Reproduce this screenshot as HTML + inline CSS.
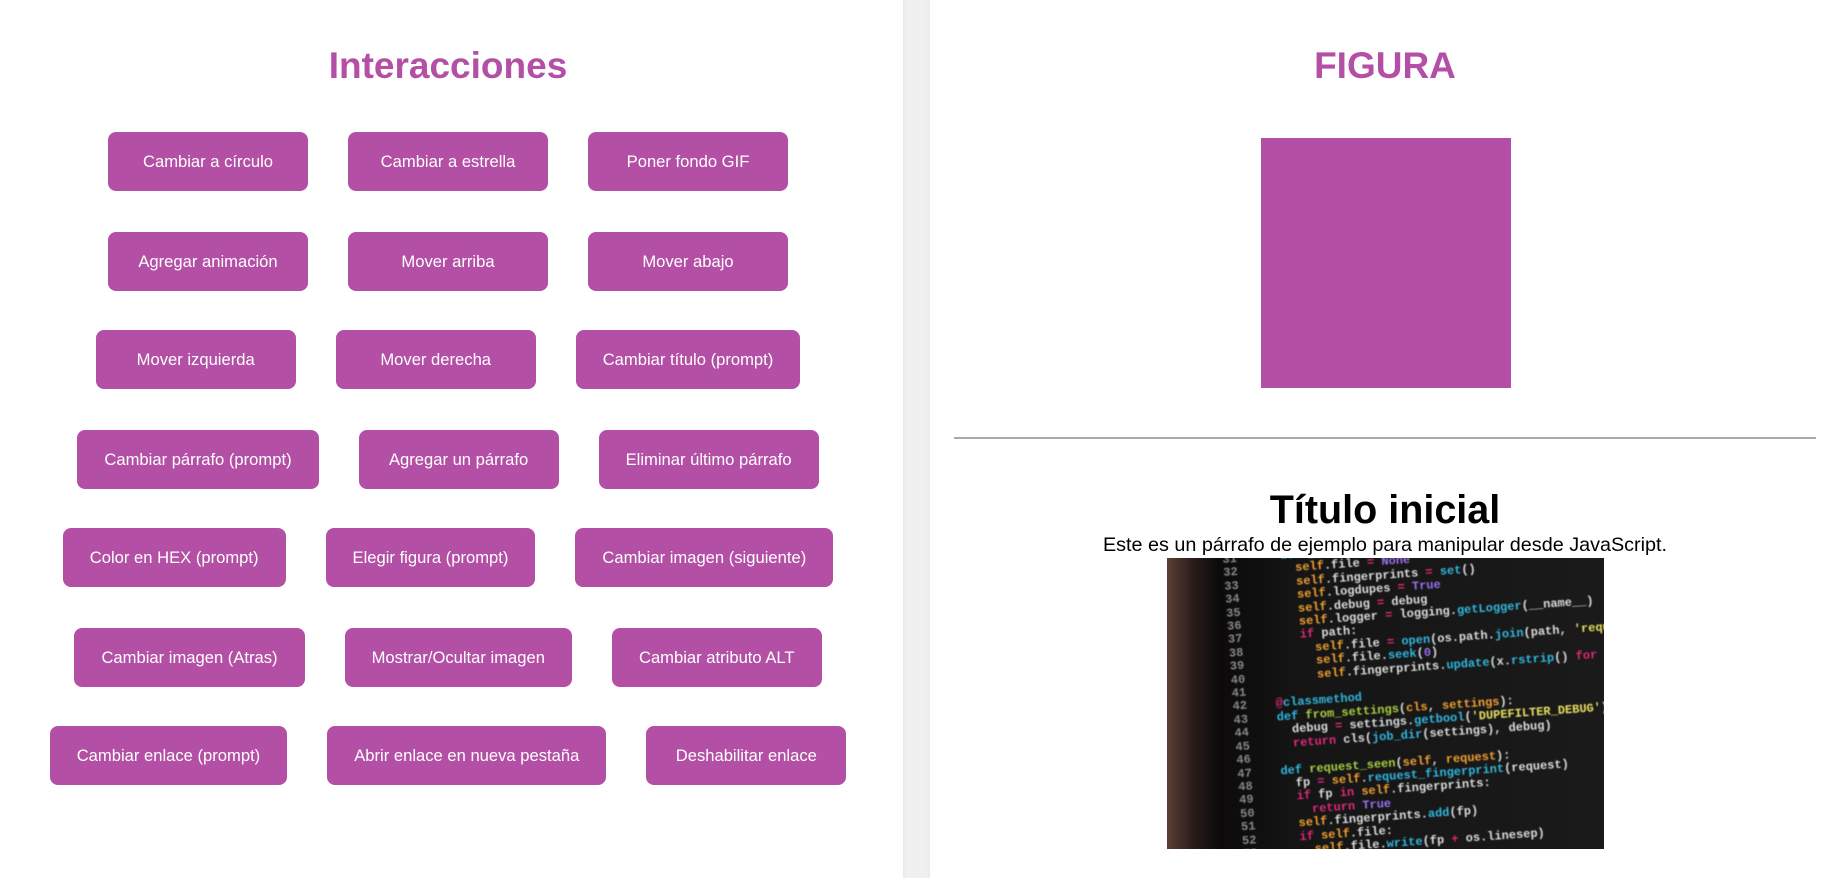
<!DOCTYPE html>
<html><head><meta charset="utf-8"><style>
*{margin:0;padding:0;box-sizing:border-box}
html{width:1837px;height:878px;overflow:hidden}
body{width:1837px;height:878px;overflow:hidden;background:#f0f0f0;font-family:"Liberation Sans",Arial,sans-serif;position:relative}
.panel{position:absolute;top:-14px;background:#fff;border-radius:14px;box-shadow:0 0 6px rgba(0,0,0,.06)}
#l{left:-14px;width:917px;height:892px;border-radius:14px 14px 0 0}
#r{left:930px;width:930px;height:892px;border-radius:14px 14px 0 0}
h1{position:absolute;color:#b44fa6;font-size:37px;font-weight:bold;text-align:center;line-height:42px}
.row{position:absolute;left:0;width:896px;display:flex;justify-content:center;gap:40px}
.b{height:59px;min-width:200px;padding:0 27px;background:#b44fa6;color:#fff;border-radius:8px;font-size:16.6px;display:flex;align-items:center;justify-content:center;white-space:nowrap}
.sq{position:absolute;left:1261px;top:138px;width:250px;height:250px;background:#b44fa6}
.hr{position:absolute;left:954px;top:437px;width:862px;height:2px;background:#aaa}
.t{position:absolute;left:954px;width:862px;text-align:center;color:#000}
.img{position:absolute;left:1167px;top:558px;width:437px;height:291px;overflow:hidden;background:linear-gradient(90deg,#5a4038 0%,#2a1c18 6%,#0c0a0a 12%,#151515 30%,#1a1a1a 100%)}
.img pre{position:absolute;left:55px;top:-4px;font-family:"Liberation Mono",monospace;font-size:12px;line-height:13.4px;color:#ddd;transform:rotate(-4deg);transform-origin:0 0;font-weight:bold;filter:blur(.4px)}
.n{color:#888}.o{color:#f0a030}.p{color:#e0287a}.c{color:#30b8e0}.g{color:#a8d040}.v{color:#9a70f0}.y{color:#e8e060}
</style></head><body>
<div class="panel" id="l"></div>
<div class="panel" id="r"></div>
<h1 style="left:0;width:896px;top:45px">Interacciones</h1>
<h1 style="left:954px;width:862px;top:45px">FIGURA</h1>
<div class="row" style="top:132px"><div class="b">Cambiar a círculo</div><div class="b">Cambiar a estrella</div><div class="b">Poner fondo GIF</div></div>
<div class="row" style="top:232px"><div class="b">Agregar animación</div><div class="b">Mover arriba</div><div class="b">Mover abajo</div></div>
<div class="row" style="top:330px"><div class="b">Mover izquierda</div><div class="b">Mover derecha</div><div class="b">Cambiar título (prompt)</div></div>
<div class="row" style="top:430px"><div class="b">Cambiar párrafo (prompt)</div><div class="b">Agregar un párrafo</div><div class="b">Eliminar último párrafo</div></div>
<div class="row" style="top:528px"><div class="b">Color en HEX (prompt)</div><div class="b">Elegir figura (prompt)</div><div class="b">Cambiar imagen (siguiente)</div></div>
<div class="row" style="top:628px"><div class="b">Cambiar imagen (Atras)</div><div class="b">Mostrar/Ocultar imagen</div><div class="b">Cambiar atributo ALT</div></div>
<div class="row" style="top:726px"><div class="b">Cambiar enlace (prompt)</div><div class="b">Abrir enlace en nueva pestaña</div><div class="b">Deshabilitar enlace</div></div>
<div class="sq"></div>
<div class="hr"></div>
<div class="t" style="top:487px;font-size:39.5px;font-weight:bold;line-height:46px">Título inicial</div>
<div class="t" style="top:533px;font-size:19.8px;line-height:24px">Este es un párrafo de ejemplo para manipular desde JavaScript.</div>
<div class="img"><pre>
<span class="n">31</span>      <span class="c">def</span> __init__(self, path):
<span class="n">32</span>        <span class="o">self</span>.file <span class="p">=</span> <span class="v">None</span>
<span class="n">33</span>        <span class="o">self</span>.fingerprints <span class="p">=</span> <span class="c">set</span>()
<span class="n">34</span>        <span class="o">self</span>.logdupes <span class="p">=</span> <span class="v">True</span>
<span class="n">35</span>        <span class="o">self</span>.debug <span class="p">=</span> debug
<span class="n">36</span>        <span class="o">self</span>.logger <span class="p">=</span> logging.<span class="c">getLogger</span>(__name__)
<span class="n">37</span>        <span class="p">if</span> path:
<span class="n">38</span>          <span class="o">self</span>.file <span class="p">=</span> <span class="c">open</span>(os.path.<span class="c">join</span>(path, <span class="y">'requests.seen'</span>)
<span class="n">39</span>          <span class="o">self</span>.file.<span class="c">seek</span>(<span class="v">0</span>)
<span class="n">40</span>          <span class="o">self</span>.fingerprints.<span class="c">update</span>(x.<span class="c">rstrip</span>() <span class="p">for</span> x <span class="p">in</span> <span class="o">self</span>.file)
<span class="n">41</span>
<span class="n">42</span>    <span class="p">@</span><span class="c">classmethod</span>
<span class="n">43</span>    <span class="c">def</span> <span class="g">from_settings</span>(<span class="o">cls</span>, <span class="o">settings</span>):
<span class="n">44</span>      debug <span class="p">=</span> settings.<span class="c">getbool</span>(<span class="y">'DUPEFILTER_DEBUG'</span>)
<span class="n">45</span>      <span class="p">return</span> cls(<span class="c">job_dir</span>(settings), debug)
<span class="n">46</span>
<span class="n">47</span>    <span class="c">def</span> <span class="g">request_seen</span>(<span class="o">self</span>, <span class="o">request</span>):
<span class="n">48</span>      fp <span class="p">=</span> <span class="o">self</span>.<span class="c">request_fingerprint</span>(request)
<span class="n">49</span>      <span class="p">if</span> fp <span class="p">in</span> <span class="o">self</span>.fingerprints:
<span class="n">50</span>        <span class="p">return</span> <span class="v">True</span>
<span class="n">51</span>      <span class="o">self</span>.fingerprints.<span class="c">add</span>(fp)
<span class="n">52</span>      <span class="p">if</span> <span class="o">self</span>.file:
<span class="n">53</span>        <span class="o">self</span>.file.<span class="c">write</span>(fp <span class="p">+</span> os.linesep)
<span class="n">54</span>
<span class="n">55</span>    <span class="c">def</span> <span class="g">request_fingerprint</span>(<span class="o">self</span>, <span class="o">request</span>):
<span class="n">56</span>      <span class="p">return</span> <span class="c">request_fingerprint</span>(request)
</pre></div>
</body></html>
